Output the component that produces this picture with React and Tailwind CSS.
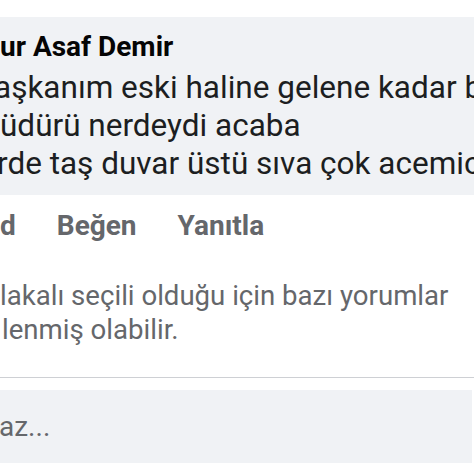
import React from 'react';

const bodyLines = [
  'aşkanım eski haline gelene kadar b',
  'üdürü nerdeydi acaba',
  'rde taş duvar üstü sıva çok acemic',
];

const App = () => {
  return (
    <div className="w-[474px] h-[474px] overflow-hidden bg-white font-['Roboto',sans-serif]">
      <div className="pt-[17px]">
        {/* comment bubble */}
        <div className="bg-[#f0f2f5] pt-[12px] pb-[12px] whitespace-nowrap">
          <div className="text-[28px] leading-[36px] font-bold text-[#050505]">ur Asaf Demir</div>
          <div className="mt-[4px] text-[31.5px] leading-[38px] text-[#1c1e21]">
            {bodyLines.map((line, i) => (
              <div key={i} className={i === 0 ? '-ml-[6px]' : i === 2 ? '-ml-[3px]' : ''}>
                {line}
              </div>
            ))}
          </div>
        </div>

        {/* actions */}
        <div className="mt-[13px] flex items-center text-[28px] leading-[36px] font-bold text-[#65676b] whitespace-nowrap">
          <span>d</span>
          <span className="ml-[41px]">Beğen</span>
          <span className="ml-[41px]">Yanıtla</span>
        </div>

        {/* filter note */}
        <div className="mt-[35px] text-[27.6px] leading-[34px] text-[#65676b] whitespace-nowrap">
          <div>lakalı seçili olduğu için bazı yorumlar</div>
          <div className="ml-[2px]">lenmiş olabilir.</div>
        </div>

        <div className="mt-[30px] border-t border-[#ced0d4]" />

        {/* comment input */}
        <div className="mt-[12px] mr-[2px] h-[73px] bg-[#f0f2f5] flex items-center text-[28px] text-[#65676b]">
          <span className="-ml-[1px]">az...</span>
        </div>
      </div>
    </div>
  );
};

export default App;
